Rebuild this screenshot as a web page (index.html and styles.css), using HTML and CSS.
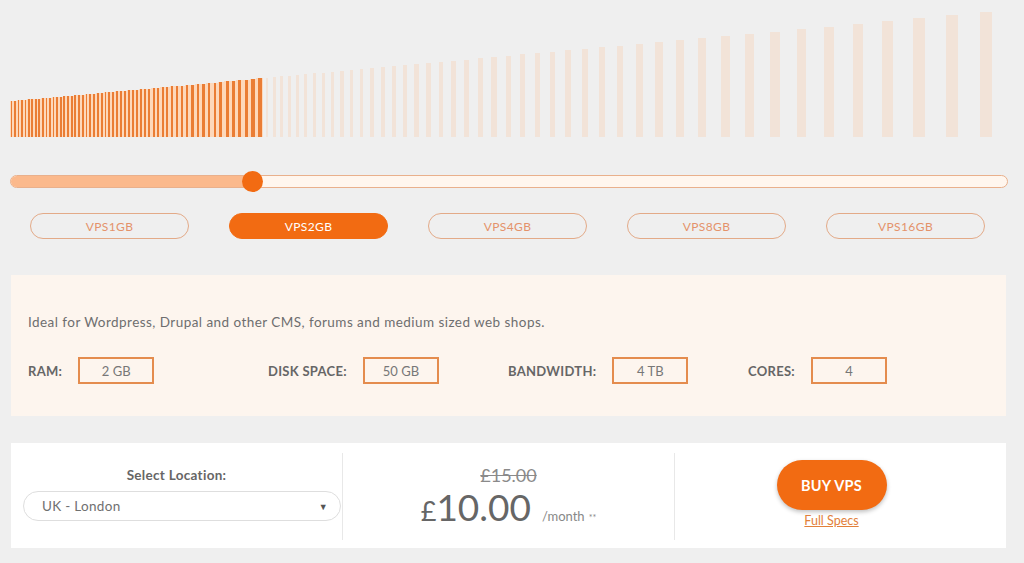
FILE: index.html
```html
<!DOCTYPE html>
<html lang="en">
  <head>
    <meta charset="UTF-8" />
    <meta name="viewport" content="width=device-width, initial-scale=1.0" />
    <title>VPS Hosting</title>

    <link rel="stylesheet" href="styles.css">
  </head>
  <body>
    <div id="bars" class="bars"></div>

    <div class="slider">
      <div class="sliderFill"></div>
      <div class="sliderThumb"></div>
    </div>

    <div class="plans">
      <div class="plan">VPS1GB</div>
      <div class="plan active">VPS2GB</div>
      <div class="plan">VPS4GB</div>
      <div class="plan">VPS8GB</div>
      <div class="plan">VPS16GB</div>
    </div>

    <div class="specs">
      <p class="desc">Ideal for Wordpress, Drupal and other CMS, forums and medium sized web shops.</p>
      <div class="specRow">
        <div class="spec"><span class="specLabel">RAM:</span><span class="specValue">2 GB</span></div>
        <div class="spec"><span class="specLabel">DISK SPACE:</span><span class="specValue">50 GB</span></div>
        <div class="spec"><span class="specLabel">BANDWIDTH:</span><span class="specValue">4 TB</span></div>
        <div class="spec"><span class="specLabel">CORES:</span><span class="specValue">4</span></div>
      </div>
    </div>

    <div class="order">
      <div class="orderCol location">
        <div class="locLabel">Select Location:</div>
        <div class="select">
          <span>UK - London</span>
          <span class="arrow">&#9660;</span>
        </div>
      </div>
      <div class="orderCol price">
        <div class="oldPrice">£15.00</div>
        <div class="newPrice">
          <span class="pound">£</span><span class="amount">10.00</span>
          <span class="period">/month</span><sup class="stars">**</sup>
        </div>
      </div>
      <div class="orderCol buy">
        <a class="buyBtn" href="#">BUY VPS</a>
        <a class="fullSpecs" href="#">Full Specs</a>
      </div>
    </div>

    <script>
      // spacing of the bars grows from left to right
      const stops = [
        [12, 3.4], [135, 4.0], [200, 5.6], [265, 7.2], [350, 10],
        [450, 13], [550, 15.5], [650, 20.5], [750, 25.5], [850, 29.5],
        [950, 34], [1000, 38],
      ];

      function spacingAt(x) {
        for (let i = 1; i < stops.length; i++) {
          const [x0, s0] = stops[i - 1];
          const [x1, s1] = stops[i];
          if (x <= x1) {
            return s0 + ((s1 - s0) * (x - x0)) / (x1 - x0);
          }
        }
        return stops[stops.length - 1][1];
      }

      const bars = document.querySelector("#bars");
      let x = 10;
      while (x < 982) {
        const s = spacingAt(x);
        const center = x + s / 2;
        const top = 101 - 0.091 * (center - 12);

        const bar = document.createElement("div");
        bar.classList.add("bar");
        if (center < 267) bar.classList.add("on");
        bar.style.width = s + "px";
        bar.style.height = 137 - top + "px";

        const stripe = document.createElement("div");
        stripe.classList.add("stripe");
        bar.append(stripe);
        bars.append(bar);

        x += s;
      }
    </script>
  </body>
</html>
```

FILE: styles.css
```css
body {
  margin: 0;
  background-color: #efefef;
  font-family: Lato, "Open Sans", Arial, sans-serif;
  color: #666;
}

.bars {
  height: 137px;
  display: flex;
  align-items: flex-end;
  padding-left: 10px;
  overflow: hidden;
}
.bar {
  display: flex;
  justify-content: center;
  flex-shrink: 0;
}
.bar .stripe {
  width: 36%;
  background-color: #f2e3d8;
}
.bar.on {
  background-color: #fdd8bb;
}
.bar.on .stripe {
  width: 48%;
  background-color: #ea7d35;
}

.slider {
  position: relative;
  margin: 38px 16px 0 10px;
  height: 11px;
  border: 1px solid #e9b08c;
  border-radius: 7px;
  background-color: #fff6ee;
}
.sliderFill {
  width: 242px;
  height: 100%;
  border-radius: 7px 0 0 7px;
  background-color: #fbb98c;
}
.sliderThumb {
  position: absolute;
  left: 231px;
  top: -5px;
  width: 21px;
  height: 21px;
  border-radius: 50%;
  background-color: #f26b12;
}

.plans {
  display: flex;
  gap: 40px;
  margin-top: 25px;
  padding-left: 30px;
}
.plan {
  width: 159px;
  height: 26px;
  box-sizing: border-box;
  border: 1px solid #e3aa88;
  border-radius: 13px;
  display: flex;
  align-items: center;
  justify-content: center;
  font-size: 12px;
  color: #e4926a;
  letter-spacing: 0.4px;
}
.plan.active {
  background-color: #f26b12;
  border-color: #f26b12;
  color: white;
}

.specs {
  margin: 36px 18px 0 11px;
  height: 141px;
  box-sizing: border-box;
  padding: 39px 0 0 17px;
  background-color: #fdf5ee;
}
.desc {
  margin: 0;
  font-size: 13.5px;
  line-height: 16px;
  color: #6e6e6e;
  letter-spacing: 0.45px;
}
.specRow {
  display: grid;
  grid-template-columns: repeat(4, 240px);
  margin-top: 27px;
}
.spec {
  display: flex;
  align-items: center;
  gap: 16px;
}
.specLabel {
  font-size: 13px;
  font-weight: bold;
  color: #666;
  letter-spacing: 0.3px;
}
.specValue {
  width: 76px;
  height: 27px;
  box-sizing: border-box;
  border: 2px solid #e48c4e;
  display: flex;
  align-items: center;
  justify-content: center;
  font-size: 13px;
  color: #777;
}

.order {
  margin: 27px 18px 0 11px;
  height: 105px;
  box-sizing: border-box;
  padding: 10px 0 8px;
  background-color: white;
  display: grid;
  grid-template-columns: 331px 332px 332px;
}
.orderCol {
  display: flex;
  flex-direction: column;
  align-items: center;
}
.orderCol + .orderCol {
  border-left: 1px solid #e8e8e8;
}

.location {
  padding-top: 14px;
}
.locLabel {
  font-size: 13.5px;
  font-weight: bold;
  line-height: 16px;
  color: #666;
  letter-spacing: 0.3px;
}
.select {
  margin: 8px 1px 0 12px;
  align-self: stretch;
  height: 30px;
  box-sizing: border-box;
  border: 1px solid #dedede;
  border-radius: 15px;
  padding: 0 12px 0 18px;
  display: flex;
  align-items: center;
  justify-content: space-between;
  font-size: 13.5px;
  color: #707070;
  letter-spacing: 0.3px;
}
.select .arrow {
  font-size: 9px;
  color: #555;
}

.price {
  padding-top: 12px;
}
.oldPrice {
  font-size: 18px;
  line-height: 20px;
  color: #8a8a8a;
  text-decoration: line-through;
}
.newPrice {
  margin-top: 1px;
  display: flex;
  align-items: baseline;
  color: #666;
}
.pound {
  font-size: 27px;
}
.amount {
  font-size: 37px;
  line-height: 42px;
}
.period {
  margin-left: 11px;
  font-size: 13px;
  color: #888;
}
.stars {
  margin-left: 4px;
  font-size: 9px;
  color: #888;
}

.buy {
  padding: 7px 18px 0 0;
}
.buyBtn {
  width: 110px;
  height: 50px;
  border-radius: 25px;
  background-color: #f26b12;
  box-shadow: 0 2px 4px rgba(0, 0, 0, 0.25);
  display: flex;
  align-items: center;
  justify-content: center;
  color: white;
  font-size: 14.5px;
  font-weight: bold;
  text-decoration: none;
  letter-spacing: 0.3px;
}
.fullSpecs {
  margin-top: 3px;
  font-size: 12.5px;
  color: #e2803a;
}
```
